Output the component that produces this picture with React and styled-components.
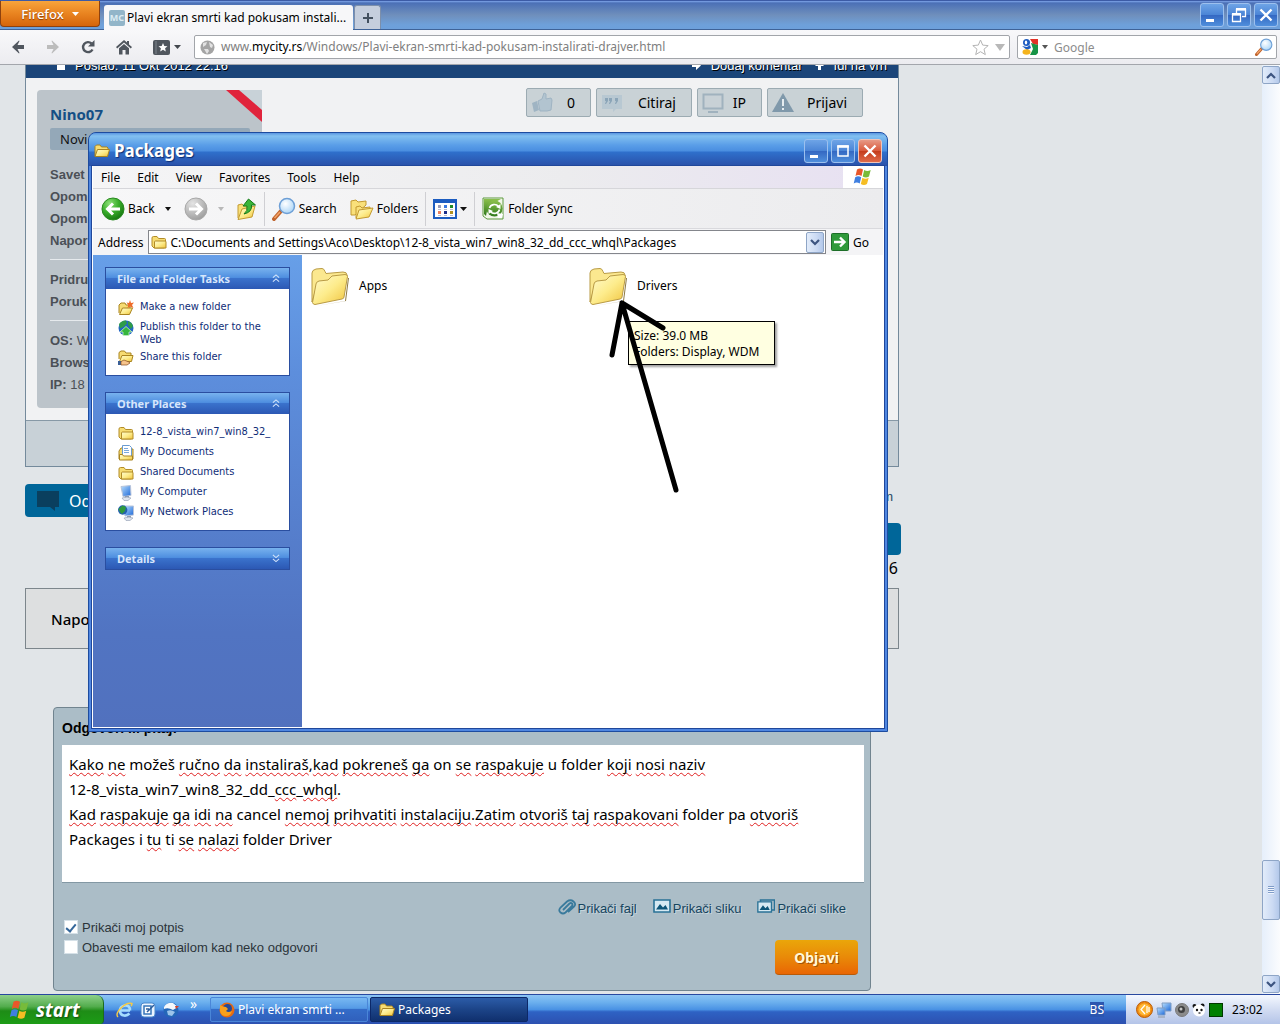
import React, { useState } from "react";
import styled, { createGlobalStyle, css } from "styled-components";

const MESSAGE =
  "Kako ne možeš ručno da instaliraš,kad pokreneš ga on se raspakuje u folder koji nosi naziv\n" +
  "12-8_vista_win7_win8_32_dd_ccc_whql.\n" +
  "Kad raspakuje ga idi na cancel nemoj prihvatiti instalaciju.Zatim otvoriš taj raspakovani folder pa otvoriš\n" +
  "Packages i tu ti se nalazi folder Driver";

const KNOWN_WORDS = ["možeš", "on", "u", "folder", "cancel", "pa", "Packages", "i", "ti", "Driver", "vista", "win", "dd"];

const ADDRESS = "C:\\Documents and Settings\\Aco\\Desktop\\12-8_vista_win7_win8_32_dd_ccc_whql\\Packages";

/* ---------- icons ---------- */

function Gradients() {
  return (
    <HiddenDefs aria-hidden="true">
      <defs>
        <linearGradient id="paper" x1="0" y1="0" x2="1" y2="1">
          <stop offset="0" stopColor="#fffbd0" />
          <stop offset="0.5" stopColor="#fdec8c" />
          <stop offset="1" stopColor="#f0c33c" />
        </linearGradient>
        <radialGradient id="green" cx="0.35" cy="0.25" r="0.8">
          <stop offset="0" stopColor="#8fe07a" />
          <stop offset="0.5" stopColor="#3bb02c" />
          <stop offset="1" stopColor="#14750f" />
        </radialGradient>
        <radialGradient id="grey" cx="0.35" cy="0.25" r="0.8">
          <stop offset="0" stopColor="#e4e4e4" />
          <stop offset="1" stopColor="#9c9c9c" />
        </radialGradient>
        <radialGradient id="lens" cx="0.4" cy="0.35" r="0.7">
          <stop offset="0" stopColor="#ffffff" />
          <stop offset="1" stopColor="#a9d4f7" />
        </radialGradient>
        <linearGradient id="screen" x1="0" y1="0" x2="1" y2="1">
          <stop offset="0" stopColor="#b9e0ff" />
          <stop offset="1" stopColor="#1d68d8" />
        </linearGradient>
        <linearGradient id="sync" x1="0" y1="0" x2="0" y2="1">
          <stop offset="0" stopColor="#8cc04c" />
          <stop offset="1" stopColor="#2f7a1c" />
        </linearGradient>
      </defs>
    </HiddenDefs>
  );
}

const FolderSmall = ({ size = 16 }) => (
  <svg width={size} height={size} viewBox="0 0 16 16">
    <path d="M1 13V3.5L2.5 2H6l1.5 2H13l1 1v2" fill="#f7dc72" stroke="#a98420" />
    <path d="M1 13.5 3.5 6.5H15.5L13.5 13.5Z" fill="url(#paper)" stroke="#a98420" />
  </svg>
);

const FolderPlain = () => (
  <svg width="16" height="16" viewBox="0 0 16 16">
    <path d="M1 12V4q0-1.500 1.500-1.500H6L7.500 4.500H13.500q1 0 1 1V13L13.500 14H3Z" fill="#f7dc72" stroke="#b28c28" />
    <path d="M3.500 14V8q0-1 1-1H14q1 0 1 1V14Z" fill="url(#paper)" stroke="#b28c28" />
  </svg>
);

const FolderLarge = () => (
  <svg width="38" height="38" viewBox="0 0 38 38">
    <path d="M5 38 34 33 37 10 38 10 35 33Z" fill="#8d7a45" />
    <path d="M1 34V5q0-3 4-4l6-.5q2 0 3 3l1 2 17-1.500q4 0 4 3V10L6 18Z" fill="#fbe88f" stroke="#b99b45" />
    <path d="M1.500 34.500 5 16q0-2 3-3l9-1 4-4 13-1.500q2.500 0 2.500 2L33 29q0 1.500-2 2L4 36.500q-2 0-2.500-2Z" fill="url(#paper)" stroke="#b99b45" />
  </svg>
);

const FolderNew = () => (
  <svg width="16" height="16" viewBox="0 0 16 16">
    <path d="M1 13V5L3 3H7L8 5h4v3" fill="#f7dc72" stroke="#a98420" />
    <path d="M1.500 14.500 4.500 8H14.500L11.500 14.500Z" fill="url(#paper)" stroke="#a98420" />
    <path d="M12 0l1 3 3-.5-2 2.500 1.500 3L12 6.500 9.500 8l.8-3L8.500 2.500 11 3Z" fill="#ef6b28" />
  </svg>
);

const FolderShare = () => (
  <svg width="16" height="16" viewBox="0 0 16 16">
    <path d="M1 9V2.500L3 1H6.500L8 3h5v3" fill="#f7dc72" stroke="#a98420" />
    <path d="M1.500 11.500 4 5.500H15L13.500 11.500Z" fill="url(#paper)" stroke="#a98420" />
    <path d="M0 11h3v4H0Z" fill="#3b5f96" />
    <path d="M3 11.500l3-1.500 5 2 1 1-3 2H3Z" fill="#f6c48c" stroke="#8a4e20" strokeWidth=".7" />
  </svg>
);

const Globe = () => (
  <svg width="16" height="16" viewBox="0 0 16 16">
    <circle cx="8" cy="8" r="7.500" fill="#2266c4" />
    <path d="M1 4q3-4 7-3.500l1 3-3 3-4 2ZM10 1q4 1.500 5 5l-2 3-3-4Z" fill="#2f9c48" />
    <path d="M8 6.500l6 5.500h-3V15.500h-6V12H2Z" fill="#35b53d" stroke="#c9f1c4" strokeWidth=".8" />
  </svg>
);

const DocsIcon = () => (
  <svg width="16" height="16" viewBox="0 0 16 16">
    <path d="M1 14V6l2-3h3l1 1h8v10Z" fill="#f7dc72" stroke="#a98420" />
    <path d="M4.500 .5h7l2 2v9h-9Z" fill="#fff" stroke="#6a9bd0" />
    <path d="M6 3.500h4M6 5.500h5M6 7.500h5" stroke="#7ba9dc" />
    <path d="M1.500 15V9.500h3l1 1.500h9V15Z" fill="url(#paper)" stroke="#a98420" />
  </svg>
);

const ComputerIcon = () => (
  <svg width="16" height="16" viewBox="0 0 16 16">
    <path d="M3 1.500l9.500-1 .5 10-8 1Z" fill="url(#screen)" stroke="#b8c4da" />
    <path d="M7 11h4v3H7Z" fill="#8f9cb2" />
    <path d="M4 13l5-1 4 1-3 2.500H6Z" fill="#dfe4ee" stroke="#8f9cb2" strokeWidth=".6" />
  </svg>
);

const NetworkIcon = () => (
  <svg width="16" height="16" viewBox="0 0 16 16">
    <path d="M6 1l9.500 0V10l-8.500 1Z" fill="url(#screen)" stroke="#b8c4da" />
    <path d="M9 11h4v3H9Z" fill="#8f9cb2" />
    <path d="M6 13l5-1 4 1-3 2.500H8Z" fill="#dfe4ee" stroke="#8f9cb2" strokeWidth=".6" />
    <circle cx="4.700" cy="5" r="4.700" fill="#2560b0" />
    <path d="M.5 4l4-3.500 3.500 1.500-1 4-3 3-2-2Z" fill="#2f9a3c" />
  </svg>
);

const RoundArrow = ({ flip, off }) => (
  <svg width="24" height="24" viewBox="0 0 24 24">
    <circle cx="12" cy="12" r="11" fill={off ? "url(#grey)" : "url(#green)"} stroke={off ? "#a8a8a8" : "#2a8a20"} />
    <path
      d="M19 12H7M12 6.500 6.500 12 12 17.500"
      transform={flip ? "matrix(-1 0 0 1 24 0)" : undefined}
      fill="none"
      stroke="#fff"
      strokeWidth="3"
    />
  </svg>
);

const UpFolder = () => (
  <svg width="20" height="24" viewBox="0 0 20 24">
    <path d="M1 21V8l4-1 2 2 7-1v4" fill="#f9e07a" stroke="#c39a30" />
    <path d="M1 22.500 5 12l13-3-3 11Z" fill="url(#paper)" stroke="#c39a30" />
    <path d="M7 17q4-3 3-8H6l5.500-7L18.500 8h-4q1 7-7.500 9Z" fill="#3bb53a" stroke="#167a18" />
  </svg>
);

const SearchIcon = ({ size = 24 }) => (
  <svg width={size} height={size} viewBox="0 0 24 24">
    <path d="M2 22 9 14" stroke="#c0632c" strokeWidth="4" strokeLinecap="round" />
    <path d="M2.500 21 8 15" stroke="#f3a468" strokeWidth="1.500" />
    <circle cx="15" cy="9" r="7.500" fill="url(#lens)" stroke="#6d9fd6" strokeWidth="1.500" />
  </svg>
);

const FoldersIcon = () => (
  <svg width="24" height="22" viewBox="0 0 24 22">
    <path d="M1 17V3l5-1 2 2 8-1v4L5 17Z" fill="#f9e07a" stroke="#c39a30" />
    <path d="M6 20V9l4-1 2 2 8-1v3" fill="#f9e07a" stroke="#c39a30" />
    <path d="M6 21l3-9 14-2-4 9Z" fill="url(#paper)" stroke="#c39a30" />
  </svg>
);

const ViewsIcon = () => (
  <svg width="24" height="20" viewBox="0 0 24 20">
    <rect x="1" y="1" width="22" height="18" fill="#fff" stroke="#1c5cc0" strokeWidth="2" />
    <path d="M1 1h22v3H1Z" fill="#1c5cc0" />
    <path d="M5 6h3v3H5Z" fill="#9a9cb8" />
    <path d="M11 6h3v3h-3Z" fill="#3a78e0" />
    <path d="M17 6h3v3h-3Z" fill="#1f8a26" />
    <path d="M5 12h3v3H5Z" fill="#e88060" />
    <path d="M11 12h3v3h-3Z" fill="#1c2f8a" />
    <path d="M17 12h3v3h-3Z" fill="#b09022" />
    <path d="M5 10.500h3M11 10.500h3M17 10.500h3M5 16.500h3M11 16.500h3M17 16.500h3" stroke="#b8bccc" />
  </svg>
);

const SyncIcon = () => (
  <svg width="23" height="23" viewBox="0 0 23 23">
    <path d="M1 1h20v21H5l-4-3Z" fill="#f2f7ea" stroke="#5c9a3c" />
    <path d="M2 2h17L6 9 4 19l-2-2Z" fill="url(#sync)" />
    <circle cx="12.500" cy="11.500" r="8" fill="url(#sync)" />
    <path d="M7.500 11a5 4.500 0 0 1 9-1.500M17.500 12.500a5 4.500 0 0 1-9 2" fill="none" stroke="#fff" strokeWidth="1.600" />
    <path d="M18.500 7v5l-4.500-2ZM6.500 17v-5l4.500 2ZM15 16l6 1-1 4h-4Z" fill="#fff" />
  </svg>
);

const WinFlag = ({ size = 22 }) => (
  <svg width={size} height={size} viewBox="0 0 22 22">
    <path d="M5 3.500q3-2 6 0L9.500 10q-3-2-6 0Z" fill="#e8572a" />
    <path d="M12.200 4q3 2 6.500 0L17 10.500q-3 2-6.300 0Z" fill="#77bb3a" />
    <path d="M3.200 11.200q3-2 6 0L7.700 17.500q-3-2-6 0Z" fill="#3f7fe0" />
    <path d="M10.400 11.700q3 2 6.300 0L15 18q-3 2-6.200 0Z" fill="#f5bd24" />
  </svg>
);

const GoIcon = () => (
  <svg width="18" height="18" viewBox="0 0 18 18">
    <rect x=".5" y=".5" width="17" height="17" rx="1" fill="#2f9a3a" stroke="#1d6e28" />
    <path d="M3 9h10M9 4.500 13.500 9 9 13.500" fill="none" stroke="#fff" strokeWidth="2.400" />
  </svg>
);

const Chevrons = ({ down }) => (
  <svg width="8" height="9" viewBox="0 0 9 10">
    <path
      d={down ? "M1 1 4.500 4 8 1M1 5.500 4.500 8.500 8 5.500" : "M1 4 4.500 1 8 4M1 8.500 4.500 5.500 8 8.500"}
      fill="none"
      stroke="#d4e4fa"
      strokeWidth="1.200"
    />
  </svg>
);

const Caret = ({ color = "#111", width = 7 }) => (
  <svg width={width} height={width > 7 ? 7 : 4} viewBox="0 0 7 4" preserveAspectRatio="none">
    <path d="M0 0h7L3.500 4Z" fill={color} />
  </svg>
);

const NavArrow = ({ flip, color }) => (
  <svg width="14" height="14" viewBox="0 0 14 14">
    <path
      d="M8 .5 1 7l7 6.500L8.500 13 6.500 9H13V5H6.500L8.500 1Z"
      fill={color}
      transform={flip ? "matrix(-1 0 0 1 14 0)" : undefined}
    />
  </svg>
);

const Reload = () => (
  <svg width="14" height="14" viewBox="0 0 14 14">
    <path d="M11.500 9.500A5 5 0 1 1 10.500 3.500" fill="none" stroke="#50565e" strokeWidth="2.400" />
    <path d="M13.500 0v6.500H7Z" fill="#50565e" />
  </svg>
);

const Home = () => (
  <svg width="16" height="15" viewBox="0 0 16 15">
    <path d="M8 0 0 7l1.200 1.400L8 2.600l6.800 5.800L16 7 13 4.400V1h-2v1.600Z" fill="#50565e" />
    <path d="M8 4 3 8.300V14.500h3.500V10h3v4.500H13V8.300Z" fill="#50565e" />
  </svg>
);

const Bookmarks = () => (
  <svg width="17" height="15" viewBox="0 0 17 15">
    <rect width="17" height="15" rx="2" fill="#50565e" />
    <path d="M3 1v13" stroke="#7d848c" />
    <path d="M10 3l1.300 2.900 3.200.3-2.400 2.100.7 3.200L10 9.800l-2.800 1.700.7-3.200-2.400-2.100 3.200-.3Z" fill="#fff" />
  </svg>
);

const SiteGlobe = () => (
  <svg width="15" height="15" viewBox="0 0 15 15">
    <circle cx="7.500" cy="7.500" r="7" fill="#a4a4a4" />
    <path d="M3 3l4-1-1 3-3 2ZM9 2l4 3-1 3-2-1ZM4 9l4 0 1 2-2 3Z" fill="#e2e2e2" />
  </svg>
);

const Star = () => (
  <svg width="17" height="17" viewBox="0 0 17 17">
    <path d="M8.500 1l2.200 5.100 5.500.5-4.200 3.600 1.300 5.400-4.800-2.900-4.800 2.900L5 10.200.8 6.600l5.500-.5Z" fill="#fff" stroke="#b4b4b4" />
  </svg>
);

const GoogleLogo = () => (
  <svg width="16" height="16" viewBox="0 0 16 16">
    <path d="M8 0h8v6l-5-1Z" fill="#e33127" />
    <path d="M9 4l7 2v8l-2 2H8l3-6Z" fill="#179446" />
    <ellipse cx="4.500" cy="3.500" rx="3.500" ry="3.500" fill="#1e5cc0" />
    <ellipse cx="4" cy="3.500" rx="1.200" ry="2" fill="#fff" />
    <path d="M0 7l5 1 3-2 1 3-4 2Z" fill="#1e5cc0" />
    <ellipse cx="4.500" cy="13" rx="4" ry="2.800" fill="#f4b31c" />
  </svg>
);

const Minimize = () => (
  <svg width="16" height="16" viewBox="0 0 16 16">
    <path d="M2 12h8v3H2Z" fill="#fff" />
  </svg>
);

const Maximize = () => (
  <svg width="16" height="16" viewBox="0 0 16 16">
    <path d="M3 3h10v10H3Z" fill="none" stroke="#fff" strokeWidth="1.500" />
    <path d="M2.300 2.300h11.500v2.500H2.300Z" fill="#fff" />
  </svg>
);

const Restore = () => (
  <svg width="16" height="16" viewBox="0 0 16 16">
    <path d="M5.500 6V2.500H14.500V9.500H11" fill="none" stroke="#fff" strokeWidth="1.300" />
    <path d="M5 1h10v2.500H5Z" fill="#fff" />
    <path d="M1.500 7.500h8v7h-8Z" fill="none" stroke="#fff" strokeWidth="1.300" />
    <path d="M1 6h9v2.500H1Z" fill="#fff" />
  </svg>
);

const Cross = () => (
  <svg width="16" height="16" viewBox="0 0 16 16">
    <path d="M2.500 2.500 13.500 13.500M13.500 2.500 2.500 13.500" stroke="#fff" strokeWidth="2.400" />
  </svg>
);

const ScrollArrow = ({ down }) => (
  <svg width="10" height="7" viewBox="0 0 10 7">
    <path d={down ? "M1 1 5 5 9 1" : "M1 6 5 2 9 6"} fill="none" stroke="#3c5480" strokeWidth="2.200" />
  </svg>
);

const LinkArrow = ({ up }) => (
  <svg width="9" height="9" viewBox="0 0 9 9">
    <path d="M0 3h4V0l5 4.500L4 9V6H0Z" fill="#fff" transform={up ? "rotate(-90 4.500 4.500)" : undefined} />
  </svg>
);

const Thumb = () => (
  <svg width="22" height="22" viewBox="0 0 22 22">
    <path d="M1 11l5-2 2 9-5 2Z" fill="#9fb4c3" />
    <path d="M7 9l4-2 2-6 2 1v5l5-1 1 2-1 10-4 1H9Z" fill="#b2c4d0" stroke="#9fb4c3" />
  </svg>
);

const Quote = () => (
  <svg width="22" height="18" viewBox="0 0 22 18">
    <path d="M1 1h20v14h-6l-3 3v-3H1Z" fill="#b8c8d2" />
    <path d="M4 4h3v3L5 10H4l1-3H4ZM8 4h3v3l-2 3H8l1-3H8ZM14 4h3v3l-2 3h-1l1-3h-1Z" fill="#8ba5b8" />
  </svg>
);

const Monitor = () => (
  <svg width="22" height="20" viewBox="0 0 22 20">
    <path d="M1.500 1.500h19v14h-19Z" fill="#c8d1d6" stroke="#a0b2be" strokeWidth="2" />
    <path d="M6 19h10" stroke="#a0b2be" strokeWidth="2" />
  </svg>
);

const Warning = () => (
  <svg width="22" height="20" viewBox="0 0 22 20">
    <path d="M11 0 22 19H0Z" fill="#8099ab" />
    <path d="M11 6v7M11 15v2" stroke="#e5ecf0" strokeWidth="2" />
  </svg>
);

const Bubble = () => (
  <svg width="24" height="20" viewBox="0 0 24 20">
    <path d="M1 0h22v16h-4v4l-5-4H1Z" fill="#0a3f5e" />
  </svg>
);

const Clip = () => (
  <svg width="18" height="16" viewBox="0 0 18 16">
    <path d="M5 11 11.500 4.500q1.500-1 2.500 0t0 2.500L7.500 13.500q-2.500 2-5 0t0-5L9 2.500q3.500-2.500 6.500 0t.5 5L10 13" fill="none" stroke="#397a9c" strokeWidth="1.800" />
  </svg>
);

const Picture = ({ stack }) => (
  <svg width="18" height="14" viewBox="0 0 18 14">
    {stack && <path d="M3.500 3V1h14v10H15" fill="none" stroke="#2a7296" strokeWidth="1.500" />}
    <g transform={stack ? "translate(0 2) scale(.85)" : undefined}>
      <path d="M1 1h16v12H1Z" fill="#d6e9f2" stroke="#2a7296" strokeWidth="1.600" />
      <path d="M3 10.500 7 5l3 3.500L12.500 6 15 10.500Z" fill="#0d5578" />
    </g>
  </svg>
);

const IeIcon = () => (
  <svg width="17" height="17" viewBox="0 0 17 17">
    <path d="M14 9.500H4.500M13.500 12.500Q11 15 8 14.500Q4 14 4 9.500T9 4.500T14 9.500" fill="none" stroke="#a6dcff" strokeWidth="2.600" />
    <path d="M2 16Q-1 13 5 7T16 2.500Q16 4 15 5" fill="none" stroke="#f6c944" strokeWidth="1.400" />
  </svg>
);

const DesktopIcon = () => (
  <svg width="16" height="16" viewBox="0 0 16 16">
    <rect x="1" y="1" width="14" height="14" rx="3" fill="#eaf4ff" stroke="#4a88cc" />
    <path d="M4 4h7v8H4Z" fill="#fff" stroke="#3776bb" strokeWidth="1.500" />
    <path d="M7 10l7-7M6 7h3" stroke="#2b5d9c" strokeWidth="1.500" />
  </svg>
);

const BirdIcon = () => (
  <svg width="16" height="16" viewBox="0 0 16 16">
    <circle cx="8" cy="8" r="7.500" fill="#2467b8" />
    <path d="M1 5q3-5 9-4l5 4-5 3q-5-3-9-1Z" fill="#f4f8fc" />
    <path d="M4 9q4-2 8 1l-3 4-4-1Z" fill="#9cc4ea" />
    <path d="M12 4h4l-3 3Z" fill="#d2402a" />
  </svg>
);

const FoxIcon = () => (
  <svg width="16" height="16" viewBox="0 0 16 16">
    <circle cx="8" cy="8" r="7.500" fill="#e66a12" />
    <circle cx="8.500" cy="6.500" r="4.500" fill="#254a9a" />
    <path d="M1 3q3 2 6 2l2 2-2 2q2 2 6 0-1 5-6 5T1 9Z" fill="#f7a01d" />
  </svg>
);

const TrayHorn = () => (
  <svg width="17" height="17" viewBox="0 0 17 17">
    <circle cx="8.500" cy="8.500" r="8" fill="#f08c12" stroke="#b95c08" />
    <circle cx="8.500" cy="8.500" r="6" fill="#ffb734" />
    <path d="M9 4 5 8.500 9 13M11 5v7M13 6v5" fill="none" stroke="#fff" strokeWidth="1.200" />
  </svg>
);

const TrayNet = () => (
  <svg width="16" height="16" viewBox="0 0 16 16">
    <path d="M6 1l9 0v8H7Z" fill="url(#screen)" stroke="#7f9cc4" />
    <path d="M1 6l8 0v7H2Z" fill="url(#screen)" stroke="#7f9cc4" />
    <path d="M2 15h7" stroke="#a8b4c8" strokeWidth="2" />
  </svg>
);

const TraySound = () => (
  <svg width="14" height="14" viewBox="0 0 14 14">
    <circle cx="7" cy="7" r="6.500" fill="#8b8b8b" stroke="#7a7a7a" />
    <circle cx="6.500" cy="6.500" r="3.500" fill="#404040" />
    <circle cx="6" cy="6" r="1.500" fill="#c8c8c8" />
  </svg>
);

const TrayPanda = () => (
  <svg width="14" height="14" viewBox="0 0 14 14">
    <circle cx="2.500" cy="3" r="2" fill="#111" />
    <circle cx="10.500" cy="2.500" r="2" fill="#111" />
    <circle cx="7" cy="7.500" r="6" fill="#fff" />
    <circle cx="5" cy="7" r="1.200" fill="#111" />
    <circle cx="9.500" cy="7" r="1.200" fill="#111" />
    <path d="M6.500 10h2" stroke="#111" strokeWidth="1.200" />
  </svg>
);

/* ---------- browser ---------- */

function BrowserChrome() {
  const [url, setUrl] = useState("www.mycity.rs/Windows/Plavi-ekran-smrti-kad-pokusam-instalirati-drajver.html");
  const [host, ...rest] = url.split("/");
  return (
    <>
      <BrowserTitle>
        <FirefoxButton type="button">
          Firefox
          <Caret color="#fff" />
        </FirefoxButton>
        <Tab type="button">
          <Favicon>MC</Favicon>
          <span>Plavi ekran smrti kad pokusam instali...</span>
        </Tab>
        <NewTab type="button" aria-label="New tab">
          <svg width="12" height="12" viewBox="0 0 12 12">
            <path d="M6 1v10M1 6h10" stroke="#43505f" strokeWidth="2" />
          </svg>
        </NewTab>
        <WindowButtons>
          <WindowButton type="button" aria-label="Minimize"><Minimize /></WindowButton>
          <WindowButton type="button" aria-label="Restore"><Restore /></WindowButton>
          <WindowButton type="button" aria-label="Close"><Cross /></WindowButton>
        </WindowButtons>
      </BrowserTitle>
      <NavBar>
        <NavButtons>
          <NavButton type="button" aria-label="Back"><NavArrow color="#50565e" /></NavButton>
          <NavButton type="button" aria-label="Forward"><NavArrow flip color="#bcbcbc" /></NavButton>
          <NavButton type="button" aria-label="Reload"><Reload /></NavButton>
          <NavButton type="button" aria-label="Home"><Home /></NavButton>
          <NavButton type="button" aria-label="Bookmarks">
            <Bookmarks />
            <Caret color="#43484e" />
          </NavButton>
        </NavButtons>
        <UrlBox>
          <SiteGlobe />
          <Stack>
            <UrlText aria-hidden="true">
              www.<b>{host.replace("www.", "")}</b>/{rest.join("/")}
            </UrlText>
            <UrlInput aria-label="Location" value={url} onChange={(e) => setUrl(e.target.value)} />
          </Stack>
          <Star />
          <Caret color="#b8b8b8" width={10} />
        </UrlBox>
        <SearchBox>
          <GoogleLogo />
          <Caret color="#555" width={6} />
          <SearchInput aria-label="Search" placeholder="Google" />
          <SearchIcon size={18} />
        </SearchBox>
      </NavBar>
    </>
  );
}

function UserCard() {
  return (
    <Card>
      <Ribbon aria-hidden="true" viewBox="0 0 36 32">
        <path d="M0 0h36v32Z" fill="#c8d2d8" />
        <path d="M0 0h13L36 20v12Z" fill="#e0243c" />
      </Ribbon>
      <UserName href="#nino">Nino07</UserName>
      <Rank>Novi</Rank>
      <Facts>
        <li><b>Savet</b></li>
        <li><b>Opom</b></li>
        <li><b>Opom</b></li>
        <li><b>Napor</b></li>
      </Facts>
      <Facts $line>
        <li><b>Pridru</b></li>
        <li><b>Poruk</b></li>
      </Facts>
      <Facts $line>
        <li><b>OS:</b> W</li>
        <li><b>Brows</b></li>
        <li><b>IP:</b> 18</li>
      </Facts>
    </Card>
  );
}

function isMisspelled(token) {
  if (!/[a-zčšž]/i.test(token)) return false;
  return !KNOWN_WORDS.includes(token);
}

function ReplyForm() {
  const [text, setText] = useState(MESSAGE);
  const [signature, setSignature] = useState(true);
  const [notify, setNotify] = useState(false);
  const tokens = text.split(/([a-zčšžćđ]+)/i);

  return (
    <Form onSubmit={(e) => e.preventDefault()}>
      <FormTitle htmlFor="reply">Odgovori ili pitaj:</FormTitle>
      <Editor>
        <SpellLayer aria-hidden="true">
          {tokens.map((token, i) => (isMisspelled(token) ? <u key={i}>{token}</u> : token))}
        </SpellLayer>
        <ReplyText id="reply" spellCheck="false" value={text} onChange={(e) => setText(e.target.value)} />
      </Editor>
      <Attachments>
        <a href="#fajl"><Clip />Prikači fajl</a>
        <a href="#slika"><Picture />Prikači sliku</a>
        <a href="#slike"><Picture stack />Prikači slike</a>
      </Attachments>
      <FormFoot>
        <Checks>
          <label>
            <input type="checkbox" checked={signature} onChange={() => setSignature(!signature)} />
            Prikači moj potpis
          </label>
          <label>
            <input type="checkbox" checked={notify} onChange={() => setNotify(!notify)} />
            Obavesti me emailom kad neko odgovori
          </label>
        </Checks>
        <Submit type="submit">Objavi</Submit>
      </FormFoot>
    </Form>
  );
}

function ForumPage() {
  return (
    <Page>
      <Post>
        <PostHeader>
          <PostDate>Poslao: 11 Okt 2012 22:16</PostDate>
          <PostLinks>
            <a href="#komentar"><LinkArrow />Dodaj komentar</a>
            <a href="#vrh"><LinkArrow up />Idi na vrh</a>
          </PostLinks>
        </PostHeader>
        <PostBody>
          <UserCard />
          <PostActions>
            <PostButton type="button"><Thumb />0</PostButton>
            <PostButton type="button" $wide><Quote />Citiraj</PostButton>
            <PostButton type="button"><Monitor />IP</PostButton>
            <PostButton type="button" $wide><Warning />Prijavi</PostButton>
          </PostActions>
        </PostBody>
        <PostFooter />
      </Post>
      <ReplyRow>
        <ReplyButton type="button"><Bubble />Odgovori</ReplyButton>
        <SideLink href="#forum">Idi na forum</SideLink>
      </ReplyRow>
      <Pager>
        <PageButton type="button">Strana</PageButton>
        <span>Strana 1 od 6</span>
      </Pager>
      <Notice>Napomena</Notice>
      <ReplyForm />
    </Page>
  );
}

/* ---------- explorer ---------- */

function TaskPanel({ title, items, closed }) {
  return (
    <Panel>
      <PanelHeader type="button">
        {title}
        <Chevrons down={closed} />
      </PanelHeader>
      {!closed && (
        <PanelBody>
          {items.map(([Icon, text]) => (
            <li key={text}>
              <Icon />
              <a href="#task">{text}</a>
            </li>
          ))}
        </PanelBody>
      )}
    </Panel>
  );
}

const FILE_TASKS = [
  [FolderNew, "Make a new folder"],
  [Globe, "Publish this folder to the Web"],
  [FolderShare, "Share this folder"],
];

const PLACES = [
  [FolderPlain, "12-8_vista_win7_win8_32_"],
  [DocsIcon, "My Documents"],
  [FolderPlain, "Shared Documents"],
  [ComputerIcon, "My Computer"],
  [NetworkIcon, "My Network Places"],
];

function Explorer() {
  const [path, setPath] = useState(ADDRESS);
  return (
    <ExplorerWindow>
      <ExplorerTitle>
        <FolderSmall />
        <h1>Packages</h1>
        <WindowButton type="button" aria-label="Minimize"><Minimize /></WindowButton>
        <WindowButton type="button" aria-label="Maximize"><Maximize /></WindowButton>
        <WindowButton type="button" aria-label="Close" $red><Cross /></WindowButton>
      </ExplorerTitle>
      <ExplorerBody>
        <MenuBar>
          {["File", "Edit", "View", "Favorites", "Tools", "Help"].map((name) => (
            <button key={name} type="button">{name}</button>
          ))}
          <FlagBox><WinFlag /></FlagBox>
        </MenuBar>
        <ToolBar>
          <ToolButton type="button" $menu><RoundArrow />Back<Caret width={6} /></ToolButton>
          <ToolButton type="button" aria-label="Forward" $menu $wide><RoundArrow flip off /><Caret color="#b8b8b8" width={6} /></ToolButton>
          <ToolButton type="button" aria-label="Up" $wide><UpFolder /></ToolButton>
          <Divider />
          <ToolButton type="button"><SearchIcon />Search</ToolButton>
          <ToolButton type="button" $wide><FoldersIcon />Folders</ToolButton>
          <Divider />
          <ToolButton type="button" aria-label="Views"><ViewsIcon /><Caret /></ToolButton>
          <Divider />
          <ToolButton type="button"><SyncIcon />Folder Sync</ToolButton>
        </ToolBar>
        <AddressBar>
          <label htmlFor="path">Address</label>
          <AddressBox>
            <FolderPlain />
            <input id="path" value={path} onChange={(e) => setPath(e.target.value)} />
            <DropButton type="button" aria-label="Show addresses"><ScrollArrow down /></DropButton>
          </AddressBox>
          <GoButton type="button"><GoIcon />Go</GoButton>
        </AddressBar>
        <ExplorerMain>
          <Sidebar>
            <TaskPanel title="File and Folder Tasks" items={FILE_TASKS} />
            <TaskPanel title="Other Places" items={PLACES} />
            <TaskPanel title="Details" closed />
          </Sidebar>
          <Files>
            <FileTile><FolderLarge /><span>Apps</span></FileTile>
            <FileTile><FolderLarge /><span>Drivers</span></FileTile>
          </Files>
        </ExplorerMain>
      </ExplorerBody>
      <Tooltip role="tooltip">
        <div>Size: 39.0 MB</div>
        <div>Folders: Display, WDM</div>
      </Tooltip>
      <Scribble aria-hidden="true" viewBox="0 0 80 200">
        <path d="M71 193 17 6M58 31 17 6 7 58" />
      </Scribble>
    </ExplorerWindow>
  );
}

/* ---------- taskbar ---------- */

function Taskbar() {
  return (
    <Bar>
      <StartButton type="button"><WinFlag size={24} />start</StartButton>
      <QuickLaunch>
        <IeIcon />
        <DesktopIcon />
        <BirdIcon />
        <span>»</span>
      </QuickLaunch>
      <TaskButton type="button"><FoxIcon />Plavi ekran smrti ...</TaskButton>
      <TaskButton type="button" $active><FolderSmall />Packages</TaskButton>
      <Language>BS</Language>
      <Tray>
        <TrayHorn />
        <TrayNet />
        <TraySound />
        <TrayPanda />
        <GreenBox />
        <time>23:02</time>
      </Tray>
    </Bar>
  );
}

export default function App() {
  return (
    <Desktop>
      <GlobalStyle />
      <Gradients />
      <BrowserChrome />
      <Viewport>
        <ForumPage />
        <Scrollbar>
          <ScrollButton type="button" aria-label="Scroll up"><ScrollArrow /></ScrollButton>
          <Track>
            <ScrollThumb />
          </Track>
          <ScrollButton type="button" aria-label="Scroll down"><ScrollArrow down /></ScrollButton>
        </Scrollbar>
      </Viewport>
      <Taskbar />
      <Explorer />
    </Desktop>
  );
}

/* ---------- styles ---------- */

const ui = `"Noto Sans", "Open Sans", sans-serif`;
const narrow = `"DejaVu Sans Condensed", "Noto Sans", sans-serif`;
const web = `"Liberation Sans", Arial, sans-serif`;

const GlobalStyle = createGlobalStyle`
  * {
    box-sizing: border-box;
  }
  body {
    margin: 0;
    overflow: hidden;
    font-family: ${ui};
    font-size: 12px;
    color: #000;
  }
  button, input, textarea {
    font: inherit;
    color: inherit;
    margin: 0;
    padding: 0;
    border: 0;
    background: none;
    outline: none;
  }
  ul {
    list-style: none;
    margin: 0;
    padding: 0;
  }
  a {
    color: inherit;
    text-decoration: none;
  }
  svg {
    flex: none;
    display: block;
  }
`;

const HiddenDefs = styled.svg`
  position: absolute;
  width: 0;
  height: 0;
`;

const Desktop = styled.div`
  position: relative;
  display: flex;
  flex-direction: column;
  height: 100vh;
  overflow: hidden;
  background: #e1e5e8;
`;

const BrowserTitle = styled.header`
  display: flex;
  flex: none;
  height: 30px;
  border-top: 1px solid #3c5ba6;
  border-bottom: 1px solid #3f6398;
  background: linear-gradient(#7fa5ea 0, #4b70b6 2px, #6f8fbc 50%, #6ea0da 85%, #6da0dc);
`;

const FirefoxButton = styled.button`
  display: flex;
  align-items: center;
  justify-content: center;
  gap: 8px;
  width: 100px;
  height: 26px;
  color: #fff;
  font-size: 13px;
  font-weight: 500;
  text-shadow: 0 1px 1px #8a3c05;
  border: 1px solid #8d410f;
  border-top: 0;
  border-radius: 0 0 4px 4px;
  background: linear-gradient(#f7a43c, #e98420 50%, #d5650c);
`;

const Tab = styled.button`
  display: flex;
  align-items: center;
  gap: 2px;
  width: 249px;
  height: 25px;
  margin: 4px 1px 0 4px;
  padding: 0 4px 0 5px;
  white-space: nowrap;
  border-radius: 3px 3px 0 0;
  background: #f7f7f9;
`;

const Favicon = styled.span`
  flex: none;
  width: 16px;
  height: 16px;
  border-radius: 2px;
  background: #92b5c9;
  color: #dcebf2;
  font-size: 9px;
  font-weight: 700;
  line-height: 16px;
  text-align: center;
`;

const NewTab = styled.button`
  display: grid;
  place-items: center;
  width: 27px;
  height: 24px;
  margin-top: 4px;
  border: 1px solid #7c8fab;
  border-bottom: 0;
  border-radius: 3px 3px 0 0;
  background: #c5cedd;
`;

const WindowButtons = styled.div`
  display: flex;
  gap: 3px;
  margin: 2px 2px 0 auto;
`;

const WindowButton = styled.button`
  display: grid;
  place-items: center;
  width: 24px;
  height: 24px;
  border: 1px solid ${(props) => (props.$red ? "#f0c4b8" : "#9cc0ee")};
  border-radius: 3px;
  background: ${(props) =>
    props.$red
      ? "linear-gradient(#e79a86, #d9583a 50%, #c43c1c 51%, #e06a4a)"
      : "linear-gradient(#6ea4e6, #4a84d6 50%, #3468c2 51%, #4f8fdc)"};
`;

const NavBar = styled.div`
  display: flex;
  align-items: center;
  flex: none;
  height: 35px;
  padding-right: 3px;
  border-bottom: 1px solid #a3a6ac;
  background: linear-gradient(#f8f8fa, #ececf0);
`;

const NavButtons = styled.div`
  display: flex;
  align-items: center;
  gap: 21px;
  width: 194px;
  padding-left: 11px;
`;

const NavButton = styled.button`
  display: flex;
  align-items: center;
  gap: 4px;
`;

const FieldBox = css`
  display: flex;
  align-items: center;
  height: 24px;
  border: 1px solid #a2a5aa;
  border-radius: 2px;
  background: #fff;
`;

const UrlBox = styled.div`
  ${FieldBox}
  flex: 1;
  gap: 6px;
  padding: 0 4px 0 5px;
`;

const Stack = styled.div`
  display: grid;
  flex: 1;
  line-height: 20px;
  & > * {
    grid-area: 1 / 1;
  }
`;

const UrlText = styled.div`
  color: #808080;
  white-space: pre;
  b {
    color: #000;
    font-weight: 400;
  }
`;

const UrlInput = styled.input`
  width: 100%;
  color: transparent;
  caret-color: #000;
`;

const SearchBox = styled.div`
  ${FieldBox}
  width: 260px;
  margin-left: 7px;
  gap: 4px;
  padding: 0 3px 0 4px;
`;

const SearchInput = styled.input`
  flex: 1;
  min-width: 0;
  padding-left: 2px;
  &::placeholder {
    color: #8c8c8c;
    opacity: 1;
  }
`;

const Viewport = styled.main`
  display: flex;
  flex: 1;
  min-height: 0;
  overflow: hidden;
`;

const Page = styled.div`
  flex: 1;
  max-width: 901px;
  margin-right: auto;
  padding-left: 25px;
  font-family: ${web};
  font-size: 13px;
`;

const Post = styled.article`
  width: 874px;
  margin-top: -13px;
  border: 1px solid #748a9b;
  background: #f1f2f3;
`;

const PostHeader = styled.div`
  display: flex;
  align-items: center;
  justify-content: space-between;
  height: 25px;
  padding: 0 11px 0 49px;
  color: #fff;
  text-shadow: 1px 1px 0 #000;
  background: #1b4579;
`;

const PostDate = styled.span`
  &::before {
    content: "";
    display: inline-block;
    width: 8px;
    height: 9px;
    margin: 0 10px 0 -18px;
    background: #fff;
  }
`;

const PostLinks = styled.div`
  display: flex;
  gap: 12px;
  a {
    display: flex;
    align-items: center;
    gap: 10px;
  }
`;

const PostBody = styled.div`
  display: flex;
  align-items: flex-start;
  justify-content: space-between;
  padding: 12px 35px 12px 11px;
`;

const Card = styled.aside`
  position: relative;
  width: 225px;
  height: 318px;
  padding: 12px 12px 0 13px;
  border-radius: 4px;
  background: #bcc4ca;
  color: #4b5056;
`;

const Ribbon = styled.svg`
  position: absolute;
  top: 0;
  right: 0;
  width: 36px;
  height: 32px;
`;

const UserName = styled.a`
  display: block;
  color: #154f85;
  font-family: ${ui};
  font-size: 15px;
  font-weight: 700;
  line-height: 24px;
`;

const Rank = styled.div`
  height: 22px;
  margin: 2px 0 14px;
  padding-left: 10px;
  border-radius: 2px;
  background: #94a8b8;
  color: #111;
  font-family: ${ui};
  line-height: 22px;
`;

const Facts = styled.ul`
  line-height: 22px;
  margin-bottom: 7px;
  ${(props) =>
    props.$line &&
    css`
      border-top: 1px solid #e6eaed;
      padding-top: 9px;
    `}
`;

const PostActions = styled.div`
  display: flex;
  gap: 5px;
`;

const PostButton = styled.button`
  display: flex;
  align-items: center;
  justify-content: space-between;
  min-width: ${(props) => (props.$wide ? "96px" : "65px")};
  height: 29px;
  padding: 0 15px 0 4px;
  margin-top: -2px;
  border: 1px solid #9cabb2;
  border-radius: 2px;
  background: #c9d2d6;
  font-family: ${ui};
  font-size: 14px;
`;

const PostFooter = styled.div`
  height: 46px;
  border-top: 1px solid #8799a6;
  background: #c8d1d7;
`;

const ReplyRow = styled.div`
  display: flex;
  justify-content: space-between;
  width: 868px;
  margin-top: 17px;
`;

const ReplyButton = styled.button`
  display: flex;
  align-items: center;
  gap: 9px;
  width: 140px;
  height: 33px;
  padding-left: 11px;
  border-radius: 4px;
  background: #006699;
  color: #fff;
  font-family: ${ui};
  font-size: 16px;
`;

const SideLink = styled.a`
  color: #274a63;
  line-height: 26px;
`;

const Pager = styled.div`
  display: flex;
  flex-direction: column;
  align-items: flex-end;
  margin-top: 6px;
  font-family: ${ui};
  font-size: 16px;
  line-height: 26px;
  span {
    padding-right: 3px;
  }
`;

const PageButton = styled.button`
  width: 90px;
  height: 32px;
  border-radius: 4px;
  background: #006699;
  color: #fff;
`;

const Notice = styled.div`
  width: 874px;
  height: 61px;
  margin-top: 7px;
  padding-left: 25px;
  border: 1px solid #7c868c;
  background: #dddfe0;
  font-family: ${ui};
  font-size: 15px;
  font-weight: 500;
  line-height: 61px;
`;

const Form = styled.form`
  display: flex;
  flex-direction: column;
  width: 818px;
  height: 284px;
  margin: 58px 0 0 28px;
  padding: 8px 6px 0 8px;
  border: 1px solid #71848f;
  border-radius: 4px;
  background: #abbdc7;
`;

const FormTitle = styled.label`
  font-size: 14px;
  font-weight: 700;
  line-height: 24px;
`;

const Editor = styled.div`
  display: grid;
  height: 138px;
  margin-top: 5px;
  border-bottom: 1px solid #8398a4;
  background: #fff;
  font-family: ${ui};
  font-size: 15px;
  line-height: 25px;
  & > * {
    grid-area: 1 / 1;
    padding: 7px;
    white-space: pre-wrap;
  }
`;

const SpellLayer = styled.div`
  color: transparent;
  u {
    text-decoration: underline wavy #e02020 1px;
    text-underline-offset: 2px;
    text-decoration-skip-ink: none;
  }
`;

const ReplyText = styled.textarea`
  width: 100%;
  resize: none;
  overflow: hidden;
`;

const Attachments = styled.div`
  display: flex;
  justify-content: flex-end;
  gap: 16px;
  margin-top: 16px;
  padding-right: 18px;
  color: #16445e;
  line-height: 20px;
  text-shadow: 1px 1px 0 #c6d5dc;
  a {
    display: flex;
    gap: 2px;
  }
`;

const FormFoot = styled.div`
  display: flex;
  align-items: flex-end;
  justify-content: space-between;
  padding-right: 6px;
`;

const Checks = styled.div`
  display: flex;
  flex-direction: column;
  align-self: flex-start;
  color: #2b343a;
  margin-top: -2px;
  padding-left: 2px;
  label {
    display: flex;
    align-items: center;
    gap: 4px;
    height: 20px;
  }
  input {
    appearance: none;
    display: grid;
    place-content: center;
    width: 14px;
    height: 14px;
    border: 1px solid #d6e1e8;
    background: #fff;
  }
  input:checked::after {
    content: "";
    width: 4px;
    height: 8px;
    border: solid #33669a;
    border-width: 0 2px 2px 0;
    transform: rotate(40deg);
  }
`;

const Submit = styled.button`
  width: 83px;
  height: 35px;
  margin-top: 21px;
  border-radius: 4px;
  border-bottom: 1px solid #b85a08;
  background: linear-gradient(#eaa60a, #e98a08 50%, #e96604);
  color: #fff8d8;
  font-family: ${ui};
  font-size: 14px;
  font-weight: 700;
  text-shadow: 1px 1px 0 #a85408;
`;

const Scrollbar = styled.div`
  display: flex;
  flex-direction: column;
  flex: none;
  width: 18px;
  padding: 1px 0;
  background: linear-gradient(90deg, #e6effb, #fbfcfe);
`;

const chrome = css`
  border: 1px solid #8ea5c6;
  border-radius: 2px;
  background: linear-gradient(90deg, #e2ecfa, #cbdaf3 60%, #b3c8ea);
`;

const ScrollButton = styled.button`
  ${chrome}
  display: grid;
  place-items: center;
  height: 18px;
`;

const Track = styled.div`
  display: flex;
  flex-direction: column;
  justify-content: flex-end;
  flex: 1;
  padding-bottom: 55px;
`;

const ScrollThumb = styled.div`
  ${chrome}
  height: 60px;
  display: grid;
  place-items: center;
  &::after {
    content: "";
    width: 6px;
    height: 8px;
    background: repeating-linear-gradient(#7f9cc8 0 1px, #eef4fd 1px 2px);
  }
`;

const ExplorerWindow = styled.section`
  position: absolute;
  left: 88px;
  top: 132px;
  display: flex;
  flex-direction: column;
  width: 800px;
  height: 600px;
  padding: 0 3px 3px;
  border: 1px solid #1d4c9f;
  border-radius: 8px 8px 0 0;
  background: #4f86e0;
`;

const ExplorerTitle = styled.div`
  display: flex;
  align-items: center;
  gap: 3px;
  height: 33px;
  margin: 0 -3px;
  padding: 3px 5px 0;
  border-radius: 7px 7px 0 0;
  background: linear-gradient(#5a96e0 0, #82c0f0 3px, #5a9ee8 12px, #4a8ee0 18px, #2f70cc 19px, #2a50a8 100%);
  h1 {
    flex: 1;
    margin: 0 0 0 1px;
    color: #fff;
    font-size: 17px;
    line-height: 24px;
    text-shadow: 1px 1px 1px #0c2c70;
  }
`;

const ExplorerBody = styled.div`
  display: flex;
  flex-direction: column;
  flex: 1;
  min-height: 0;
  border: 1px solid #fff;
  border-top: 0;
  outline: 1px solid #20479a;
  background: #fff;
`;

const MenuBar = styled.nav`
  display: flex;
  align-items: center;
  gap: 17px;
  height: 23px;
  padding-left: 8px;
  border-bottom: 1px solid #d6d6da;
  background: linear-gradient(90deg, #f5f5f6, #ececee 60%, #e7e0f2);
`;

const FlagBox = styled.div`
  display: grid;
  place-items: center;
  width: 40px;
  height: 22px;
  margin-left: auto;
  background: #fff;
`;

const ToolBar = styled.div`
  display: flex;
  align-items: center;
  height: 40px;
  padding-left: 8px;
  border-bottom: 1px solid #d9d9dd;
  background: linear-gradient(90deg, #f7f7f8, #ececee);
`;

const ToolButton = styled.button`
  display: flex;
  align-items: center;
  gap: 3px;
  margin-left: ${(props) => (props.$wide ? "13px" : "0")};
  svg:last-child:not(:first-child) {
    margin-left: ${(props) => (props.$menu ? "7px" : "0")};
  }
`;

const Divider = styled.div`
  width: 1px;
  height: 34px;
  margin: 0 7px;
  background: #cfcfd3;
`;

const AddressBar = styled.div`
  display: flex;
  align-items: center;
  height: 26px;
  padding: 0 14px 0 5px;
  gap: 5px;
  background: #f4f4f6;
`;

const AddressBox = styled.div`
  display: flex;
  align-items: center;
  flex: 1;
  height: 24px;
  gap: 3px;
  padding: 0 1px 0 2px;
  border: 1px solid #84868c;
  background: #fff;
  input {
    flex: 1;
    min-width: 0;
  }
`;

const DropButton = styled.button`
  ${chrome}
  display: grid;
  place-items: center;
  width: 18px;
  height: 21px;
`;

const GoButton = styled.button`
  display: flex;
  align-items: center;
  gap: 4px;
`;

const ExplorerMain = styled.div`
  display: flex;
  flex: 1;
  min-height: 0;
`;

const Sidebar = styled.aside`
  display: flex;
  flex-direction: column;
  gap: 16px;
  width: 209px;
  padding: 12px;
  background: linear-gradient(#679fe8, #5d8edc 25%, #5174c2 80%, #5171be);
`;

const Panel = styled.div`
  border: 1px solid #2a4ea0;
  background: #fff;
`;

const PanelHeader = styled.button`
  display: flex;
  align-items: center;
  justify-content: space-between;
  width: 100%;
  height: 21px;
  padding: 0 9px 0 11px;
  color: #d6e6fc;
  font-size: 11px;
  font-weight: 700;
  background: linear-gradient(#78b2ee, #4f8fe0 45%, #3a72cc 50%, #2c58b4);
`;

const PanelBody = styled.ul`
  display: flex;
  flex-direction: column;
  gap: 4px;
  padding: 11px 11px 9px 12px;
  color: #0f2d78;
  font-family: ${narrow};
  font-size: 11px;
  li {
    display: flex;
    gap: 6px;
    min-height: 16px;
    line-height: 13px;
  }
`;

const Files = styled.div`
  display: grid;
  grid-template-columns: 278px 278px;
  align-content: start;
  flex: 1;
  padding: 13px 0 0 9px;
`;

const FileTile = styled.div`
  display: flex;
  align-items: center;
  gap: 10px;
  span {
    padding-bottom: 4px;
  }
`;

const Tooltip = styled.div`
  position: absolute;
  left: 539px;
  top: 188px;
  width: 147px;
  height: 44px;
  padding: 6px 5px;
  border: 1px solid #000;
  background: #ffffe1;
  box-shadow: 2px 2px 2px #a0a0a0;
  line-height: 16px;
  white-space: nowrap;
`;

const Scribble = styled.svg`
  position: absolute;
  left: 516px;
  top: 164px;
  width: 80px;
  height: 200px;
  path {
    fill: none;
    stroke: #000;
    stroke-width: 5;
    stroke-linecap: round;
    stroke-linejoin: round;
  }
`;

const Bar = styled.footer`
  display: flex;
  align-items: center;
  flex: none;
  height: 30px;
  border-top: 1px solid #2848a0;
  background: linear-gradient(#8cc4f4, #6cb0ee 25%, #4a92e4 50%, #2e62c4 58%, #2c50b0);
  color: #fff;
`;

const StartButton = styled.button`
  display: flex;
  align-items: center;
  gap: 4px;
  width: 104px;
  height: 100%;
  padding-left: 8px;
  border-radius: 0 8px 4px 0;
  border-right: 1px solid #1c6a1c;
  background: linear-gradient(#8ed08a, #52ac4c 40%, #1e8c16 55%, #1c9c16);
  color: #fff;
  font-size: 19px;
  font-style: italic;
  font-weight: 700;
  text-shadow: 1px 1px 2px #0c400c;
`;

const QuickLaunch = styled.div`
  display: flex;
  align-items: center;
  gap: 7px;
  width: 106px;
  padding-left: 12px;
  span {
    align-self: flex-start;
    margin: -6px 0 0 4px;
    font-size: 14px;
    line-height: 18px;
  }
`;

const TaskButton = styled.button`
  display: flex;
  align-items: center;
  gap: 3px;
  width: 158px;
  height: 25px;
  margin-right: 2px;
  padding-left: 8px;
  border-radius: 2px;
  border: 1px solid ${(props) => (props.$active ? "#0c2868" : "#4a86d8")};
  background: ${(props) =>
    props.$active ? "linear-gradient(#2c5ca8, #1c4488 50%, #10306e)" : "linear-gradient(#78b8f2, #559ae6 45%, #346cc8 50%, #3060bc)"};
  color: #fff;
`;

const Language = styled.span`
  margin: 0 22px 0 auto;
  background: #2c56b0;
  line-height: 15px;
`;

const Tray = styled.div`
  display: flex;
  align-items: center;
  gap: 3px;
  width: 154px;
  height: 100%;
  padding-left: 10px;
  background: linear-gradient(#f4f8ff, #d2dcf2 50%, #b4c4e8);
  color: #000;
  time {
    margin-left: 6px;
  }
`;

const GreenBox = styled.span`
  width: 14px;
  height: 14px;
  border: 1px solid #003800;
  background: #008000;
`;
